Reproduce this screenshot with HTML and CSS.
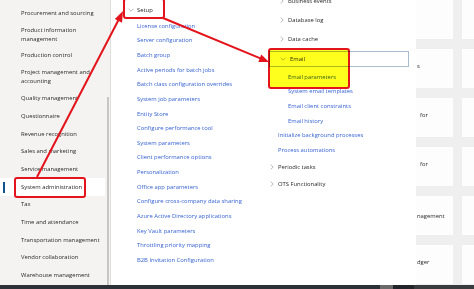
FILE: index.html
```html
<!DOCTYPE html>
<html lang="en">
<head>
    <meta charset="UTF-8">
    <title>System administration</title>
    <link rel="stylesheet" href="styles.css">
</head>
<body>

    <div class="screen">
        <nav class="modules">
            <ul class="module-list">
                <li>Procurement and sourcing</li>
                <li class="two-line">Product information<br>management</li>
                <li>Production control</li>
                <li class="two-line">Project management and<br>accounting</li>
                <li>Quality management</li>
                <li>Questionnaire</li>
                <li>Revenue recognition</li>
                <li>Sales and marketing</li>
                <li>Service management</li>
                <li class="selected">System administration</li>
                <li>Tax</li>
                <li>Time and attendance</li>
                <li>Transportation management</li>
                <li>Vendor collaboration</li>
                <li>Warehouse management</li>
            </ul>
            <div class="scroll-track"><div class="scroll-thumb"></div></div>
        </nav>

        <section class="menu">
            <div class="menu-col setup-col">
                <div class="group-head">
                    <svg class="chev-down" viewBox="0 0 6 4"><path d="M0.6 0.8 L3 3.2 L5.4 0.8"/></svg>
                    Setup
                </div>
                <a class="link">License configuration</a>
                <a class="link">Server configuration</a>
                <a class="link">Batch group</a>
                <a class="link">Active periods for batch jobs</a>
                <a class="link">Batch class configuration overrides</a>
                <a class="link">System job parameters</a>
                <a class="link">Entity Store</a>
                <a class="link">Configure performance tool</a>
                <a class="link">System parameters</a>
                <a class="link">Client performance options</a>
                <a class="link">Personalization</a>
                <a class="link">Office app parameters</a>
                <a class="link">Configure cross-company data sharing</a>
                <a class="link">Azure Active Directory applications</a>
                <a class="link">Key Vault parameters</a>
                <a class="link">Throttling priority mapping</a>
                <a class="link">B2B Invitation Configuration</a>
            </div>

            <div class="menu-col tree-col">
                <div class="node level2">
                    <svg class="chev" viewBox="0 0 4 6"><path d="M0.8 0.6 L3.2 3 L0.8 5.4"/></svg>
                    Business events
                </div>
                <div class="node level2">
                    <svg class="chev" viewBox="0 0 4 6"><path d="M0.8 0.6 L3.2 3 L0.8 5.4"/></svg>
                    Database log
                </div>
                <div class="node level2">
                    <svg class="chev" viewBox="0 0 4 6"><path d="M0.8 0.6 L3.2 3 L0.8 5.4"/></svg>
                    Data cache
                </div>
                <div class="node level2 focused">
                    <svg class="chev-down" viewBox="0 0 6 4"><path d="M0.6 0.8 L3 3.2 L5.4 0.8"/></svg>
                    Email
                </div>
                <div class="children">
                    <a class="link sub">Email parameters</a>
                    <a class="link sub">System email templates</a>
                    <a class="link sub">Email client constraints</a>
                    <a class="link sub">Email history</a>
                    <a class="link">Initialize background processes</a>
                    <a class="link">Process automations</a>
                </div>
                <div class="node level1">
                    <svg class="chev" viewBox="0 0 4 6"><path d="M0.8 0.6 L3.2 3 L0.8 5.4"/></svg>
                    Periodic tasks
                </div>
                <div class="node level1">
                    <svg class="chev" viewBox="0 0 4 6"><path d="M0.8 0.6 L3.2 3 L0.8 5.4"/></svg>
                    OTS Functionality
                </div>
            </div>
        </section>

        <section class="tiles">
            <div class="tile"></div><div class="tile"></div>
            <div class="tile"><span class="tile-title">s</span></div><div class="tile"></div>
            <div class="tile"><span class="tile-title gap">for</span></div><div class="tile"></div>
            <div class="tile"><span class="tile-title gap">for</span></div><div class="tile"></div>
            <div class="tile"><span class="tile-title low">nagement</span></div><div class="tile"></div>
            <div class="tile"><span class="tile-title">dger</span></div><div class="tile"></div>
        </section>
    </div>

    <div class="taskbar">
        <div class="task-seg"></div>
        <div class="task-seg light"></div>
        <div class="task-seg dark"></div>
        <div class="task-seg"></div>
    </div>

    <!-- annotation layer drawn over the screenshot -->
    <div class="mark mark-setup"></div>
    <div class="mark mark-sysadmin"></div>
    <div class="mark mark-email"></div>
    <svg class="arrows" viewBox="0 0 474 289">
        <line x1="37" y1="177" x2="119" y2="19"/>
        <polygon points="123,11 122,22.7 114.8,19.1"/>
        <line x1="163" y1="18" x2="261" y2="58.7"/>
        <polygon points="269,62 258.3,61.9 261.3,54.5"/>
    </svg>

</body>
</html>
```

FILE: styles.css
```css
body {
    margin: 0; width: 474px; height: 289px; overflow: hidden; position: relative;
    font-family: "Open Sans", "Noto Sans", sans-serif; font-size: 5.85px; color: #2b2a29; background: #fff;
}

.screen { display: flex; height: 285px; overflow: hidden; }

/* module list on the left */
.modules { width: 110px; flex: none; display: flex; background: #f4f3f2; border-right: 1px solid #e1dfdd; }
.module-list { list-style: none; margin: 0; padding: 4.45px 0 0; width: 105px; }
.module-list li { position: relative; padding: 4.35px 0 4.35px 21px; line-height: 9px; white-space: nowrap; }
.module-list li.two-line { padding: 3.5px 0 3.5px 21px; }
.module-list li.selected { background: #fff; }
.module-list li.selected::before { content: ""; position: absolute; left: 3px; top: 3.7px; width: 2px; height: 11px; background: #0f548c; }
.scroll-track { width: 5px; }
.scroll-thumb { width: 2px; margin: 97px 0 0 1.5px; height: 190px; background: #c8c6c4; }

/* flyout menu */
.menu { width: 305px; flex: none; display: flex; background: #fff; }
.menu-col { display: flex; flex-direction: column; }
.setup-col { width: 157px; padding-top: 1.7px; }
.tree-col { width: 148px; margin-top: -10px; }

.group-head { height: 17px; display: flex; align-items: center; gap: 3px; padding-left: 17px; color: #201f1e; }
.link { display: block; height: 14.65px; line-height: 14.65px; padding-left: 26px; color: #3762d0; white-space: nowrap; }

.chev { width: 4px; height: 6px; flex: none; }
.chev-down { width: 6px; height: 4px; flex: none; }
.chev path, .chev-down path { fill: none; stroke: #8a8886; stroke-width: 0.6; }

.node { height: 16px; display: flex; align-items: center; gap: 4px; white-space: nowrap; }
.node.level2 { margin-top: 3px; padding-left: 12px; }
.node.level2 .chev-down { margin-left: -1px; }
.node.level1 { margin-top: 1px; padding-left: 2px; }
.node.focused { width: 127px; margin-left: 1px; padding-left: 11px; border: 1px solid #a9bccd; height: 14px; margin-top: 4px; margin-bottom: 1px; }

.children { margin-top: 1.7px; }
.children .link { padding-left: 10px; }
.children .link.sub { padding-left: 20px; }

/* workspace tiles behind the flyout */
.tiles {
    flex: 1; display: grid; grid-template-columns: 37px 12px; grid-auto-rows: 39px;
    column-gap: 9px; row-gap: 10px; background: #efefef; overflow: hidden;
}
.tile { background: #fdfdfd; }
.tile-title { display: block; padding: 13px 0 0 1px; line-height: 9px; white-space: nowrap; }
.tile-title.gap { padding-left: 4px; }
.tile-title.low { padding-top: 16px; }

.taskbar { height: 4px; display: flex; background: #2c3138; }
.task-seg { flex: none; width: 380px; }
.task-seg.light { width: 13px; background: #6a6a6a; }
.task-seg.dark { width: 21px; background: #22252a; }
.task-seg:last-child { flex: 1; background: #3a3b3d; }

/* red annotations */
.mark { position: absolute; border: 2px solid #e3141b; border-radius: 3px; box-sizing: border-box; }
.mark-setup { left: 123px; top: -2px; width: 42px; height: 21px; }
.mark-sysadmin { left: 14px; top: 177px; width: 72px; height: 21px; }
.mark-email { left: 268px; top: 48px; width: 82px; height: 41px; background: #ffff1e; mix-blend-mode: multiply; }

.arrows { position: absolute; left: 0; top: 0; width: 474px; height: 289px; pointer-events: none; }
.arrows line { stroke: #e3141b; stroke-width: 2; }
.arrows polygon { fill: #e3141b; }
```
